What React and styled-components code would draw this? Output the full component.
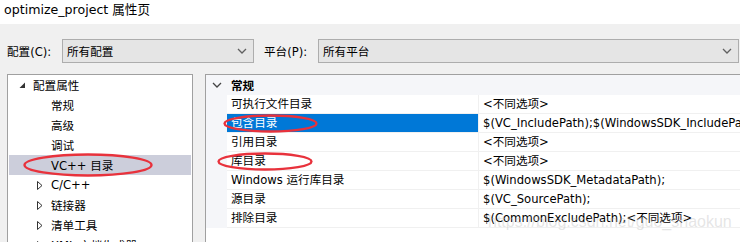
import React from "react";
import styled, { createGlobalStyle } from "styled-components";

const FONT = `"DejaVu Sans", "Noto Sans CJK SC", sans-serif`;

const GlobalStyle = createGlobalStyle`
  html, body {
    margin: 0;
    padding: 0;
    background: #f0f0f0;
    overflow: hidden;
  }
  body {
    font-family: ${FONT};
    font-size: 11.6px;
    color: #000;
  }
`;

const tree = [
  { label: "配置属性", level: 0, expanded: true },
  { label: "常规", level: 1 },
  { label: "高级", level: 1 },
  { label: "调试", level: 1 },
  { label: "VC++ 目录", level: 1, selected: true },
  { label: "C/C++", level: 1, collapsed: true },
  { label: "链接器", level: 1, collapsed: true },
  { label: "清单工具", level: 1, collapsed: true },
  { label: "XML 文档生成器", level: 1, collapsed: true },
];

const rows = [
  ["可执行文件目录", "<不同选项>"],
  ["包含目录", "$(VC_IncludePath);$(WindowsSDK_IncludePath);", true],
  ["引用目录", "<不同选项>"],
  ["库目录", "<不同选项>"],
  ["Windows 运行库目录", "$(WindowsSDK_MetadataPath);"],
  ["源目录", "$(VC_SourcePath);"],
  ["排除目录", "$(CommonExcludePath);<不同选项>"],
];

const Window = styled.div`
  position: relative;
  width: 740px;
  height: 242px;
  overflow: hidden;
`;

const TitleBar = styled.div`
  height: 24px;
  background: #fff;
  padding: 0 0 0 4px;
  box-sizing: border-box;
  font-size: 12.6px;
  line-height: 20px;
`;

const ComboRow = styled.div`
  display: flex;
  align-items: center;
  height: 24px;
  margin-top: 15px;
  padding-left: 7px;
`;

const Label = styled.span`
  width: ${(p) => p.$w}px;
  flex: none;
`;

const Combo = styled.div`
  display: flex;
  align-items: center;
  justify-content: space-between;
  width: ${(p) => p.$w}px;
  height: 24px;
  box-sizing: border-box;
  border: 1px solid #adadad;
  background: #e5e5e5;
  padding: 0 6px 0 4px;
  margin-right: ${(p) => p.$gap || 0}px;
  flex: none;
`;

const Panels = styled.div`
  display: flex;
  margin-top: 11px;
  padding-left: 7px;
  gap: 12px;
`;

const TreePanel = styled.div`
  width: 186px;
  height: 200px;
  box-sizing: border-box;
  border: 1px solid #a0a0a0;
  background: #fff;
  flex: none;
`;

const TreeRow = styled.div`
  display: flex;
  align-items: center;
  height: 20px;
  margin: 0 1px;
  background: ${(p) => (p.$selected ? "#cccedb" : "transparent")};
  padding-left: ${(p) => (p.$level === 0 ? 10 : 28)}px;
  white-space: nowrap;
`;

const Expander = styled.span`
  width: 14px;
  display: flex;
  align-items: center;
  flex: none;
`;

const GridPanel = styled.div`
  flex: 1;
  height: 200px;
  box-sizing: border-box;
  border-top: 1px solid #a0a0a0;
  border-left: 1px solid #a0a0a0;
  background: #fff;
`;

const GroupHeader = styled.div`
  display: flex;
  align-items: center;
  height: 20px;
  background: #f5f6f9;
  font-weight: bold;
`;

const GroupTitle = styled.span`
  padding-left: 4px;
`;

const Gutter = styled.div`
  width: 21px;
  flex: none;
  align-self: stretch;
  background: #f5f6f9;
  display: flex;
  align-items: center;
  justify-content: center;
`;

const PropRow = styled.div`
  display: flex;
  height: 19px;
`;

const NameCell = styled.div`
  width: 252px;
  flex: none;
  box-sizing: border-box;
  padding-left: 4px;
  line-height: 18px;
  border-bottom: 1px solid #f0f0f0;
  border-right: 1px solid #f0f0f0;
  background: ${(p) => (p.$selected ? "#0078d7" : "#fff")};
  color: ${(p) => (p.$selected ? "#fff" : "#000")};
  white-space: nowrap;
`;

const ValueCell = styled.div`
  flex: 1;
  box-sizing: border-box;
  padding-left: 4px;
  line-height: 18px;
  border-bottom: 1px solid #f0f0f0;
  white-space: nowrap;
  overflow: hidden;
`;

const Mark = styled.svg`
  position: absolute;
  left: ${(p) => p.$x}px;
  top: ${(p) => p.$y}px;
  pointer-events: none;
`;

const Watermark = styled.div`
  position: absolute;
  left: 488px;
  top: 213px;
  font-family: "Liberation Sans", Arial, sans-serif;
  font-size: 16px;
  color: rgba(180, 180, 180, 0.35);
  white-space: nowrap;
  pointer-events: none;
`;

const Chevron = ({ color = "#606060" }) => (
  <svg width="10" height="6" viewBox="0 0 10 6">
    <path d="M1 1 L5 5 L9 1" fill="none" stroke={color} strokeWidth="1.3" />
  </svg>
);

const Ellipse = ({ x, y, w, h }) => (
  <Mark $x={x} $y={y} width={w} height={h} viewBox={`0 0 ${w} ${h}`}>
    <ellipse
      cx={w / 2}
      cy={h / 2}
      rx={w / 2 - 1.5}
      ry={h / 2 - 1.5}
      fill="none"
      stroke="#e8323c"
      strokeWidth="2.4"
    />
  </Mark>
);

const ExpandIcon = ({ open }) =>
  open ? (
    <svg width="7" height="7" viewBox="0 0 7 7">
      <path d="M6 0.5 L6 6 L0.5 6 Z" fill="#333" />
    </svg>
  ) : (
    <svg width="6" height="9" viewBox="0 0 6 9">
      <path d="M0.5 0.5 L5 4.5 L0.5 8.5 Z" fill="none" stroke="#333" />
    </svg>
  );

export default function App() {
  return (
    <Window>
      <GlobalStyle />
      <TitleBar>optimize_project 属性页</TitleBar>
      <ComboRow>
        <Label $w={55}>配置(C):</Label>
        <Combo $w={192} $gap={10}>
          <span>所有配置</span>
          <Chevron />
        </Combo>
        <Label $w={54}>平台(P):</Label>
        <Combo $w={421}>
          <span>所有平台</span>
          <Chevron />
        </Combo>
      </ComboRow>
      <Panels>
        <TreePanel>
          {tree.map((t) => (
            <TreeRow key={t.label} $level={t.level} $selected={t.selected}>
              <Expander>
                {(t.expanded || t.collapsed) && <ExpandIcon open={t.expanded} />}
              </Expander>
              <span>{t.label}</span>
            </TreeRow>
          ))}
        </TreePanel>
        <GridPanel>
          <GroupHeader>
            <Gutter>
              <Chevron color="#444" />
            </Gutter>
            <GroupTitle>常规</GroupTitle>
          </GroupHeader>
          {rows.map(([name, value, sel]) => (
            <PropRow key={name}>
              <Gutter />
              <NameCell $selected={sel}>{name}</NameCell>
              <ValueCell>{value}</ValueCell>
            </PropRow>
          ))}
        </GridPanel>
      </Panels>
      <Ellipse x={23} y={153} w={130} h={24} />
      <Ellipse x={223} y={114} w={95} h={19} />
      <Ellipse x={217} y={152} w={96} h={19} />
      <Watermark>https://blog.csdn.net/guo_shaokun</Watermark>
    </Window>
  );
}
